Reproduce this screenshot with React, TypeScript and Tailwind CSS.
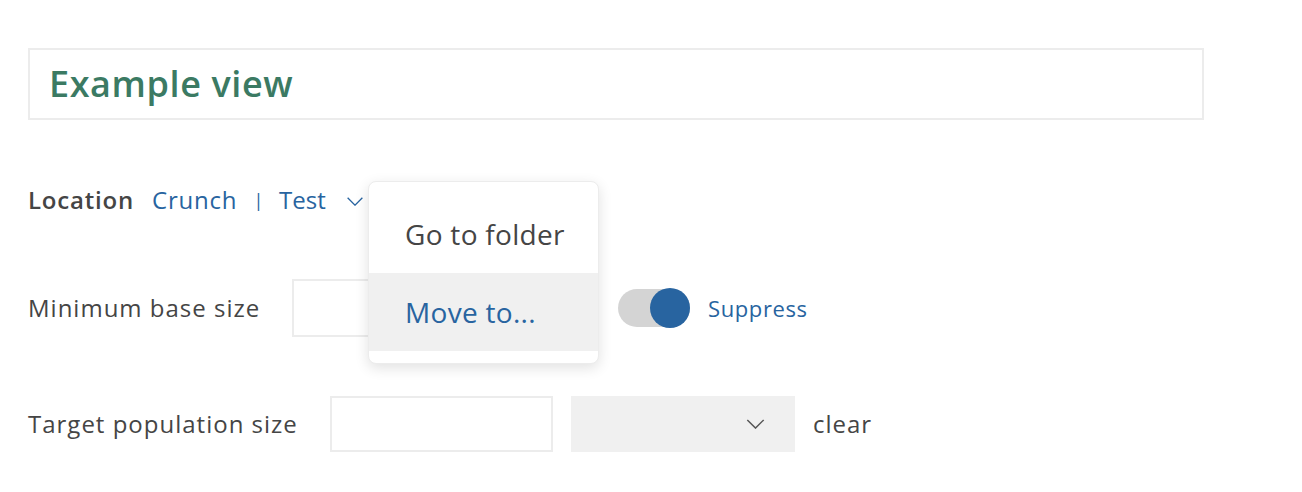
import React from "react"

function Chevron({ className }: { className?: string }) {
  return (
    <svg viewBox="0 0 20 11" className={className} fill="none" stroke="currentColor" strokeWidth="1.6">
      <path d="M1 1l9 9 9-9" />
    </svg>
  )
}

export default function App() {
  return (
    <div
      className="min-h-[492px] bg-white pt-[48px] pl-[28px] text-[#454545]"
      style={{ fontFamily: "'Open Sans', Lato, sans-serif" }}
    >
      <div className="flex h-[72px] w-[1176px] items-center border-2 border-[#ececec] pl-[19px]">
        <h1 className="text-[36px] font-semibold leading-none tracking-[0.6px] text-[#3b7a63]">Example view</h1>
      </div>

      {/* Location row with open menu */}
      <div className="relative mt-[60px] flex h-[40px] items-center text-[24px] tracking-[0.8px]">
        <span className="mr-[18px] font-semibold">Location</span>
        <span className="text-[#2864a0]">Crunch</span>
        <span className="ml-[16px] mr-[15px] text-[18px] text-[#2864a0]">|</span>
        <span className="tracking-normal text-[#2864a0]">Test</span>
        <Chevron className="ml-[20px] mt-[2px] h-[9px] w-[18px] text-[#2864a0]" />

        <div className="absolute left-[340px] top-[1px] z-10 w-[231px] overflow-hidden rounded-[8px] border border-[#ececec] bg-white pb-[12px] text-[28px] tracking-[0.3px] shadow-[0_4px_14px_rgba(0,0,0,0.12)]">
          <div className="pl-[36px] pt-[37px] pb-[24px] leading-[30px] text-[#454545]">Go to folder</div>
          <div className="bg-[#f0f0f0] pl-[36px] pt-[24px] pb-[24px] leading-[30px] text-[#2864a0]">Move to...</div>
        </div>
      </div>

      {/* Minimum base size */}
      <div className="mt-[59px] flex h-[58px] items-center text-[24px] tracking-[1px]">
        <span className="w-[264px]">Minimum base size</span>
        <div className="h-[58px] w-[222px] border-2 border-[#ececec]" />
        <div className="ml-[104px] flex items-center">
          <div className="flex h-[38px] w-[72px] items-center justify-end rounded-full bg-[#d4d4d4]">
            <div className="h-[40px] w-[40px] rounded-full bg-[#2864a0]" />
          </div>
          <span className="ml-[18px] text-[22px] tracking-[0.6px] text-[#2864a0]">Suppress</span>
        </div>
      </div>

      {/* Target population size */}
      <div className="mt-[59px] flex h-[56px] items-center text-[24px] tracking-[1px]">
        <span className="w-[302px]">Target population size</span>
        <div className="h-[56px] w-[223px] border-2 border-[#ececec]" />
        <div className="ml-[18px] flex h-[56px] w-[224px] items-center justify-end bg-[#f0f0f0] pr-[30px]">
          <Chevron className="h-[10px] w-[19px] text-[#555]" />
        </div>
        <span className="ml-[18px]">clear</span>
      </div>
    </div>
  )
}
